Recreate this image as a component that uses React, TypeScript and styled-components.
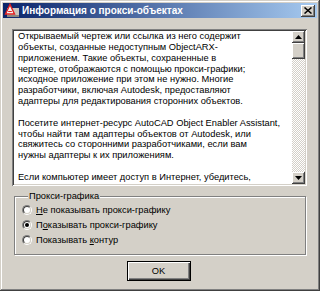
import React from 'react';
import styled, { createGlobalStyle } from 'styled-components';

const Global = createGlobalStyle`
  html, body { margin: 0; padding: 0; background: #D4D0C8; }
  body {
    width: 320px;
    height: 291px;
    overflow: hidden;
    font-family: "Liberation Sans", Arial, sans-serif;
    color: #000;
  }
`;

const Window = styled.div`
  box-sizing: border-box;
  width: 320px;
  height: 291px;
  padding: 3px;
  background: #d4d0c8;
  box-shadow: inset -1px -1px 0 #404040, inset 1px 1px 0 #d4d0c8,
    inset -2px -2px 0 #808080, inset 2px 2px 0 #ffffff;
  display: flex;
  flex-direction: column;
`;

const TitleBar = styled.div`
  height: 15px;
  flex: none;
  display: flex;
  align-items: center;
  gap: 2px;
  padding: 0 2px 0 1px;
  background: linear-gradient(to right, #0a246a, #a6caf0);
`;

const Title = styled.span`
  flex: 1;
  color: #fff;
  font-weight: bold;
  font-size: 10px;
  line-height: 15px;
  white-space: nowrap;
`;

const CloseButton = styled.div`
  width: 14px;
  height: 12px;
  box-sizing: border-box;
  background: #d4d0c8;
  box-shadow: inset -1px -1px 0 #404040, inset 1px 1px 0 #ffffff,
    inset -2px -2px 0 #808080;
  display: flex;
  align-items: center;
  justify-content: center;
`;

const Content = styled.div`
  flex: 1;
  display: flex;
  flex-direction: column;
  padding: 11px 10px 0 9px;
`;

const TextBox = styled.div`
  height: 157px;
  flex: none;
  box-sizing: border-box;
  display: flex;
  padding: 2px;
  background: #fff;
  box-shadow: inset 1px 1px 0 #808080, inset -1px -1px 0 #ffffff,
    inset 2px 2px 0 #404040, inset -2px -2px 0 #d4d0c8;
`;

const TextArea = styled.div`
  flex: 1;
  overflow: hidden;
  padding: 0 0 0 4px;
  font-size: 9.3px;
  line-height: 10.85px;
`;

const Line = styled.div`
  height: 10.85px;
  white-space: nowrap;
`;

const ScrollBar = styled.div`
  width: 13px;
  flex: none;
  display: flex;
  flex-direction: column;
  background: repeating-conic-gradient(#ffffff 0 25%, #d4d0c8 0 50%) 0 0 / 2px 2px;
`;

const Raised = styled.div<{ $h: number }>`
  height: ${(p) => p.$h}px;
  flex: none;
  box-sizing: border-box;
  background: #d4d0c8;
  box-shadow: inset -1px -1px 0 #404040, inset 1px 1px 0 #ffffff,
    inset -2px -2px 0 #808080;
  display: flex;
  align-items: center;
  justify-content: center;
`;

const Track = styled.div`
  flex: 1;
`;

const Group = styled.fieldset`
  margin: 5px 1px 0 2px;
  padding: 0 0 7px 7px;
  min-width: 0;
  border: 1px solid #808080;
  box-shadow: inset 1px 1px 0 #ffffff, 1px 1px 0 #ffffff;
`;

const Legend = styled.legend`
  margin-left: 6px;
  padding: 0 1px;
  font-size: 9.3px;
  line-height: 11px;
  background: #d4d0c8;
`;

const RadioRow = styled.label`
  height: 15px;
  display: flex;
  align-items: center;
  gap: 4px;
  font-size: 9.3px;
`;

const RadioOuter = styled.span`
  width: 10px;
  height: 10px;
  box-sizing: border-box;
  border-radius: 50%;
  border: 1px solid;
  border-color: #808080 #ffffff #ffffff #808080;
  flex: none;
  display: flex;
`;

const RadioInner = styled.span`
  flex: 1;
  border-radius: 50%;
  border: 1px solid;
  border-color: #404040 #d4d0c8 #d4d0c8 #404040;
  background: #fff;
  display: flex;
  align-items: center;
  justify-content: center;
`;

const Dot = styled.span`
  width: 4px;
  height: 4px;
  border-radius: 50%;
  background: #000;
`;

const Key = styled.span`
  text-decoration: underline;
`;

const ButtonRow = styled.div`
  display: flex;
  justify-content: center;
  padding: 6px 0 0 0;
  margin-left: -2px;
`;

const OkButton = styled.div`
  width: 64px;
  height: 20px;
  box-sizing: border-box;
  border: 1px solid #000;
  background: #d4d0c8;
  box-shadow: inset 1px 1px 0 #ffffff, inset -1px -1px 0 #404040,
    inset -2px -2px 0 #808080;
  display: flex;
  align-items: center;
  justify-content: center;
  font-size: 9.3px;
`;

const lines = [
  'Открываемый чертеж или ссылка из него содержит',
  'объекты, созданные недоступным ObjectARX-',
  'приложением. Такие объекты, сохраненные в',
  'чертеже, отображаются с помощью прокси-графики;',
  'исходное приложение при этом не нужно. Многие',
  'разработчики, включая Autodesk, предоставляют',
  'адаптеры для редактирования сторонних объектов.',
  '',
  'Посетите интернет-ресурс AutoCAD Object Enabler Assistant,',
  'чтобы найти там адаптеры объектов от Autodesk, или',
  'свяжитесь со сторонними разработчиками, если вам',
  'нужны адаптеры к их приложениям.',
  '',
  'Если компьютер имеет доступ в Интернет, убедитесь,',
];

const AppIcon = () => (
  <svg width="16" height="15" viewBox="0 0 16 15">
    <rect x="3" y="5" width="12" height="9" fill="#c8c4bc" />
    <rect x="3" y="12" width="12" height="2" fill="#8a8680" />
    <path d="M1.5 11 L6 1.5 L10.5 11 Z" fill="#f4f4f4" stroke="#e02020" strokeWidth="1.4" />
    <path d="M4.2 8.5 H7.8" stroke="#e02020" strokeWidth="1" />
  </svg>
);

const CloseIcon = () => (
  <svg width="8" height="7" viewBox="0 0 8 7">
    <path d="M0.5 0.5 L7.5 6.5 M7.5 0.5 L0.5 6.5" stroke="#000" strokeWidth="1.5" />
  </svg>
);

const Arrow = ({ down }: { down?: boolean }) => (
  <svg width="7" height="4" viewBox="0 0 7 4">
    <path d={down ? 'M0 0 H7 L3.5 4 Z' : 'M0 4 H7 L3.5 0 Z'} fill="#000" />
  </svg>
);

const Radio = ({ checked, children }: { checked?: boolean; children: React.ReactNode }) => (
  <RadioRow>
    <RadioOuter>
      <RadioInner>{checked && <Dot />}</RadioInner>
    </RadioOuter>
    <span>{children}</span>
  </RadioRow>
);

export default function App() {
  return (
    <>
      <Global />
      <Window>
        <TitleBar>
          <AppIcon />
          <Title>Информация о прокси-объектах</Title>
          <CloseButton>
            <CloseIcon />
          </CloseButton>
        </TitleBar>
        <Content>
          <TextBox>
            <TextArea>
              {lines.map((l, i) => (
                <Line key={i}>{l}</Line>
              ))}
            </TextArea>
            <ScrollBar>
              <Raised $h={12}>
                <Arrow />
              </Raised>
              <Raised $h={16} />
              <Track />
              <Raised $h={12}>
                <Arrow down />
              </Raised>
            </ScrollBar>
          </TextBox>
          <Group>
            <Legend>Прокси-графика</Legend>
            <Radio>
              <Key>Н</Key>е показывать прокси-графику
            </Radio>
            <Radio checked>
              П<Key>о</Key>казывать прокси-графику
            </Radio>
            <Radio>
              Показывать <Key>к</Key>онтур
            </Radio>
          </Group>
          <ButtonRow>
            <OkButton>OK</OkButton>
          </ButtonRow>
        </Content>
      </Window>
    </>
  );
}
